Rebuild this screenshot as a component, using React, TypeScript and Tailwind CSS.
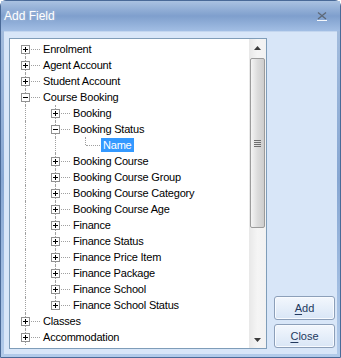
import React from "react";

type Node = {
  label: string;
  children?: Node[];
  expandable?: boolean;
  expanded?: boolean;
  selected?: boolean;
  more?: boolean;
};

type Row = {
  label: string;
  level: number;
  guides: boolean[];
  hasPrev: boolean;
  hasNext: boolean;
  expandable: boolean;
  expanded: boolean;
  selected: boolean;
};

const leaf = (label: string): Node => ({ label, expandable: true });

const tree: Node[] = [
  leaf("Enrolment"),
  leaf("Agent Account"),
  leaf("Student Account"),
  {
    label: "Course Booking",
    expandable: true,
    expanded: true,
    children: [
      leaf("Booking"),
      {
        label: "Booking Status",
        expandable: true,
        expanded: true,
        children: [{ label: "Name", selected: true }],
      },
      leaf("Booking Course"),
      leaf("Booking Course Group"),
      leaf("Booking Course Category"),
      leaf("Booking Course Age"),
      leaf("Finance"),
      leaf("Finance Status"),
      leaf("Finance Price Item"),
      leaf("Finance Package"),
      leaf("Finance School"),
      leaf("Finance School Status"),
    ],
  },
  leaf("Classes"),
  { ...leaf("Accommodation"), more: true },
];

function flatten(nodes: Node[], level: number, guides: boolean[], out: Row[]) {
  nodes.forEach((node, i) => {
    const isLast = i === nodes.length - 1 && !node.more;
    out.push({
      label: node.label,
      level,
      guides,
      hasPrev: level > 0 || i > 0,
      hasNext: !isLast,
      expandable: !!node.expandable,
      expanded: !!node.expanded,
      selected: !!node.selected,
    });
    if (node.expanded && node.children) flatten(node.children, level + 1, [...guides, !isLast], out);
  });
  return out;
}

const rows = flatten(tree, 0, [], []);

function ExpandBox({ expanded }: { expanded: boolean }) {
  return (
    <svg width="9" height="9" viewBox="0 0 9 9" className="absolute left-[11px] top-[4px]" shapeRendering="crispEdges">
      <rect x="0.5" y="0.5" width="8" height="8" fill="#fff" stroke="#919191" />
      <path d="M2 4.5h5" stroke="#000" />
      {!expanded && <path d="M4.5 2v5" stroke="#000" />}
    </svg>
  );
}

function TreeRow({ row }: { row: Row }) {
  return (
    <div className="flex h-4 items-center">
      {row.guides.map((cont, i) => (
        <div key={i} className="relative h-4 w-[30px] shrink-0">
          {cont && <span className="absolute left-[15px] top-0 h-4 border-l border-dotted border-[#a0a0a0]" />}
        </div>
      ))}
      <div className="relative h-4 w-[30px] shrink-0">
        {row.hasPrev && <span className="absolute left-[15px] top-0 h-[8px] border-l border-dotted border-[#a0a0a0]" />}
        {row.hasNext && <span className="absolute left-[15px] top-[8px] h-[8px] border-l border-dotted border-[#a0a0a0]" />}
        <span className="absolute left-[16px] top-[8px] w-[14px] border-t border-dotted border-[#a0a0a0]" />
        {row.expandable && <ExpandBox expanded={row.expanded} />}
      </div>
      <span
        className={
          row.selected
            ? "ml-px flex h-[14px] items-center bg-[#3399ff] px-[2px] text-white"
            : "ml-px flex h-[14px] items-center px-[2px] text-black"
        }
      >
        {row.label}
      </span>
    </div>
  );
}

function ScrollBar() {
  return (
    <div className="flex w-[17px] shrink-0 flex-col bg-gradient-to-r from-[#e8e8e8] via-[#f5f5f5] to-[#f2f2f2]">
      <div className="flex h-[17px] items-center justify-center">
        <svg width="7" height="4" viewBox="0 0 7 4">
          <path d="M0 4L3.5 0L7 4Z" fill="#3b3b3b" />
        </svg>
      </div>
      <div className="flex flex-1 flex-col px-[1px] pt-[2px]">
        <div className="flex h-[170px] items-center justify-center rounded-[2px] border border-[#9b9b9b] bg-gradient-to-r from-[#f4f4f4] via-[#dcdcdc] to-[#cdcdcd]">
          <div className="flex flex-col gap-[1px]">
            <span className="h-px w-[7px] bg-[#6e6e6e]" />
            <span className="h-px w-[7px] bg-[#6e6e6e]" />
            <span className="h-px w-[7px] bg-[#6e6e6e]" />
            <span className="h-px w-[7px] bg-[#6e6e6e]" />
          </div>
        </div>
      </div>
      <div className="flex h-[17px] items-center justify-center">
        <svg width="7" height="4" viewBox="0 0 7 4">
          <path d="M0 0L3.5 4L7 0Z" fill="#3b3b3b" />
        </svg>
      </div>
    </div>
  );
}

function DialogButton({ hotkey, rest }: { hotkey: string; rest: string }) {
  return (
    <button
      type="button"
      className="flex h-[24px] w-[61px] items-center justify-center rounded-[3px] border border-[#8c9fb9] bg-gradient-to-b from-[#f3f7fd] to-[#d9e6f6] text-[11px] text-[#22395e] shadow-[inset_0_0_0_1px_#f8fbff]"
    >
      <span className="underline underline-offset-[2px]">{hotkey}</span>
      {rest}
    </button>
  );
}

export default function App() {
  return (
    <div className="h-[358px] w-[341px] font-['Liberation_Sans',Arial,sans-serif]">
      <div className="flex h-full w-full flex-col rounded-t-[6px] border border-[#4a6a98] bg-gradient-to-b from-[#a8c0df] via-[#86a6d2] to-[#b2cbea]">
        <div className="flex h-[30px] shrink-0 items-center justify-between pl-[3px] pr-[12px] bg-gradient-to-b from-[#aac2e1] via-[#7f9fcd] to-[#a2bee4]">
          <span className="text-[12px] text-white [text-shadow:0_0_3px_rgba(255,255,255,0.35)]">Add Field</span>
          <svg width="12" height="10" viewBox="0 0 12 10">
            <path d="M2 1.5L10 8M10 1.5L2 8" stroke="#5d6877" strokeWidth="1.3" />
            <path d="M1 9.5H11" stroke="#f4f7fb" strokeWidth="1" />
          </svg>
        </div>
        <div className="mx-[3px] mb-[3px] flex flex-1 border-t border-[#c3d6ef] bg-[#d8e6f8] pl-[5px] pr-[2px] pt-[6px] pb-[5px]">
          <div className="flex h-[311px] w-[258px] shrink-0 border border-[#7f9db9] bg-white">
            <div className="flex-1 overflow-hidden pt-[2px] text-[11px] tracking-[-0.2px]">
              {rows.map((row, i) => (
                <TreeRow key={i} row={row} />
              ))}
            </div>
            <ScrollBar />
          </div>
          <div className="ml-[7px] flex flex-1 flex-col justify-end gap-[4px] pb-[1px]">
            <DialogButton hotkey="A" rest="dd" />
            <DialogButton hotkey="C" rest="lose" />
          </div>
        </div>
      </div>
    </div>
  );
}
